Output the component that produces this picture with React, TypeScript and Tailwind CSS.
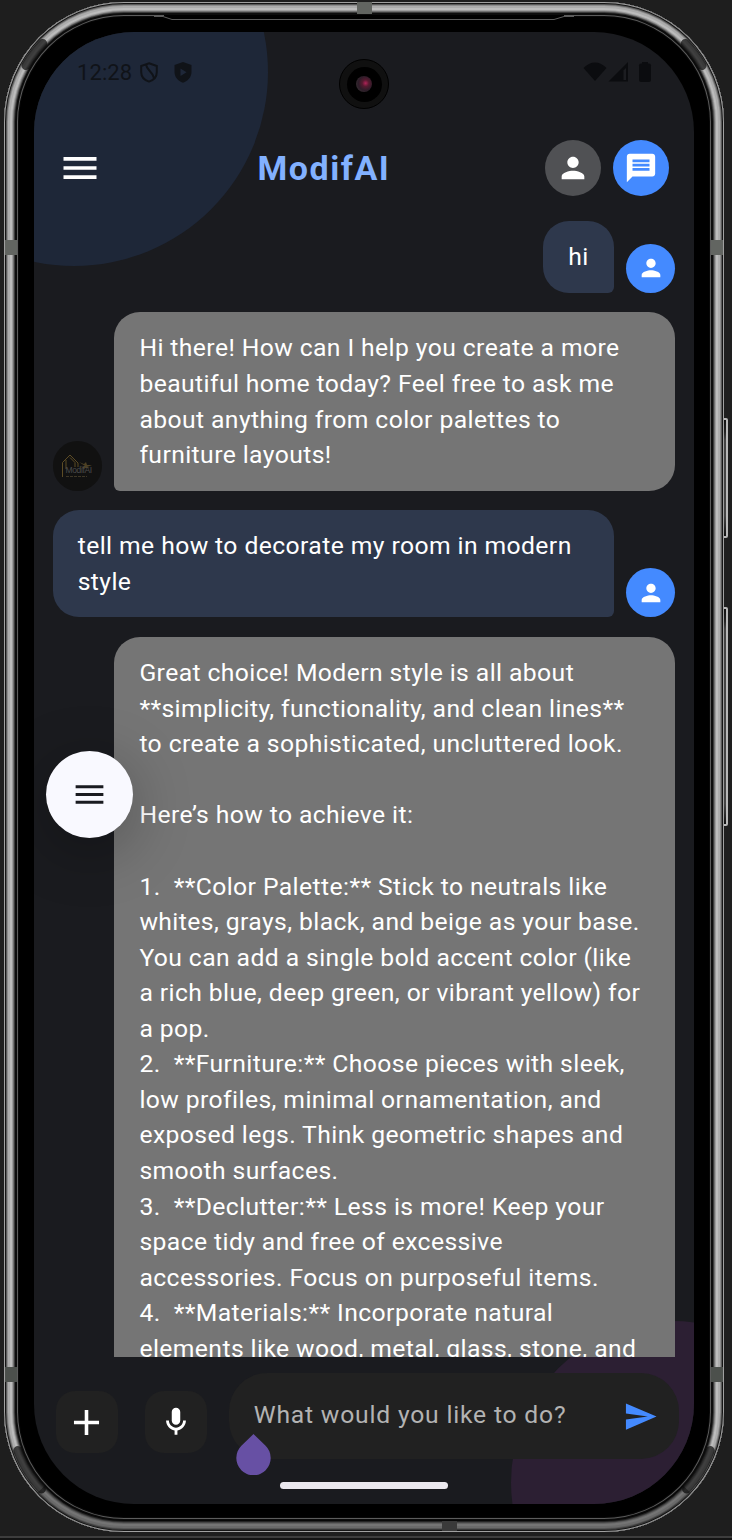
import React from "react";

const PERSON = "M12 12c2.21 0 4-1.79 4-4s-1.79-4-4-4-4 1.79-4 4 1.79 4 4 4zm0 2c-2.67 0-8 1.34-8 4v2h16v-2c0-2.66-5.33-4-8-4z";
const MENU = "M3 18h18v-2H3v2zm0-5h18v-2H3v2zm0-7v2h18V6H3z";
const CHAT = "M20 2H4c-1.1 0-1.99.9-1.99 2L2 22l4-4h14c1.1 0 2-.9 2-2V4c0-1.1-.9-2-2-2z";
const MIC = "M12 14c1.66 0 3-1.34 3-3V5c0-1.66-1.34-3-3-3S9 3.34 9 5v6c0 1.66 1.34 3 3 3zm5-3c0 2.76-2.24 5-5 5s-5-2.24-5-5H5c0 3.53 2.61 6.43 6 6.92V21h2v-3.08c3.39-.49 6-3.39 6-6.92h-2z";

function Glyph({ d, className }: { d: string; className: string }) {
  return (
    <svg viewBox="0 0 24 24" fill="currentColor" className={className}>
      <path d={d} />
    </svg>
  );
}

const GREETING = [
  "Hi there! How can I help you create a more",
  "beautiful home today? Feel free to ask me",
  "about anything from color palettes to",
  "furniture layouts!",
];

const QUESTION = ["tell me how to decorate my room in modern", "style"];

const ANSWER = [
  "Great choice! Modern style is all about",
  "**simplicity, functionality, and clean lines**",
  "to create a sophisticated, uncluttered look.",
  "",
  "Here’s how to achieve it:",
  "",
  "1.  **Color Palette:** Stick to neutrals like",
  "whites, grays, black, and beige as your base.",
  "You can add a single bold accent color (like",
  "a rich blue, deep green, or vibrant yellow) for",
  "a pop.",
  "2.  **Furniture:** Choose pieces with sleek,",
  "low profiles, minimal ornamentation, and",
  "exposed legs. Think geometric shapes and",
  "smooth surfaces.",
  "3.  **Declutter:** Less is more! Keep your",
  "space tidy and free of excessive",
  "accessories. Focus on purposeful items.",
  "4.  **Materials:** Incorporate natural",
  "elements like wood, metal, glass, stone, and",
];

function Lines({ lines }: { lines: string[] }) {
  return <p className="whitespace-pre">{lines.join("\n")}</p>;
}

function UserAvatar() {
  return (
    <div className="flex size-[49.4px] shrink-0 items-center justify-center rounded-full bg-[#448aff] text-white">
      <Glyph d={PERSON} className="size-7" />
    </div>
  );
}

function BotAvatar() {
  return (
    <div className="flex size-[49.4px] shrink-0 items-center justify-center rounded-full bg-[#111111]">
      <svg viewBox="0 0 49 49" className="size-[49px]" fill="none">
        <path d="M9.500 35V20.500L17 13l8 8v4M13 27V18m4-2.500 5 5V25" stroke="#5d4c25" strokeWidth="1" />
        <path d="m26 20 5 2 2-2 1 3 5 0-5 2 3 1h-9l4-2z" fill="#4d4023" />
        <text x="12.500" y="31" fontSize="8.500" textLength="27" className="font-['Liberation_Sans']" fill="#4b4b4b">ModifAI</text>
        <path d="M13 34.500h21" stroke="#4a412d" strokeWidth=".8" strokeDasharray="3 1" />
      </svg>
    </div>
  );
}

function StatusBar() {
  return (
    <div className="flex h-20 items-center justify-between pr-[42px] pl-[43px] text-[#101318]">
      <div className="flex items-center">
        <span className="w-[63px] text-[22px] tracking-[0.1px]">12:28</span>
        <svg viewBox="0 0 18 21" className="h-[21px] w-[18px]" fill="none" stroke="currentColor" strokeWidth="2">
          <path d="M9 1.200 16.800 4v6c0 4.500-3.300 8.200-7.800 9.600C4.500 18.200 1.200 14.500 1.200 10V4z" />
          <path d="M6 2.500C7 9 13 10 14 16" />
        </svg>
        <svg viewBox="0 0 18 21" className="ml-4 h-[21px] w-[18px]" fill="currentColor" fillRule="evenodd">
          <path d="M9 0 17.500 3v7c0 5-3.500 9-8.500 10.800C4 19 .5 15 .5 10V3zM6.500 6.500v7.500l6-3.750z" />
        </svg>
      </div>
      <svg viewBox="0 0 70 22" className="h-[22px] w-[70px] text-[#0b0c0f]" fill="currentColor">
        <path d="M1.500 7C8-.5 18-.5 24.500 7L13 20z" />
        <path d="M26.500 20.500 46 1v19.500z" />
        <path d="M41.500 9.500 44 7v12h-2.500z" fill="#1c1d21" />
        <rect x="57" y="2.500" width="12" height="18.500" rx="2" />
        <rect x="60" y="1" width="6" height="3" />
      </svg>
    </div>
  );
}

function Header() {
  return (
    <header className="flex h-28 items-center justify-between pr-[24.600px] pl-[24.400px]">
      <Glyph d={MENU} className="size-[44px] text-white" />
      <h1 className="mt-px text-[34px] font-bold tracking-[1.540px] text-[#82b1ff]">ModifAI</h1>
      <div className="flex gap-3">
        <div className="flex size-14 items-center justify-center rounded-full bg-[#505154] text-white">
          <Glyph d={PERSON} className="size-[34px]" />
        </div>
        <div className="flex size-14 items-center justify-center rounded-full bg-[#448aff] text-white">
          <svg viewBox="0 0 24 24" className="size-[34px]">
            <path d={CHAT} fill="currentColor" />
            <path d="M6 6h12v2H6zM6 9h12v2H6zM6 12h12v2H6z" fill="#448aff" />
          </svg>
        </div>
      </div>
    </header>
  );
}

function RimDetails() {
  return (
    <svg viewBox="0 0 720 1530" className="absolute inset-0 h-[1530px] w-[720px]" fill="none">
      <g stroke="#0a0a0a" strokeOpacity=".7" strokeWidth="9" strokeLinecap="round">
        <path d="M22 63.500A113 113 0 0 1 38.700 41.500" />
        <path d="M698 63.500A113 113 0 0 0 681.300 41.500" />
        <path d="M13.800 1448.600A113 113 0 0 0 37.400 1487" />
        <path d="M706.200 1448.600A113 113 0 0 1 682.600 1487" />
      </g>
      <path
        d="M37.400 1487A113 113 0 0 0 120 1523H600A113 113 0 0 0 682.600 1487"
        stroke="#000"
        strokeOpacity=".38"
        strokeWidth="10"
      />
      <path d="M160 14.500H560" stroke="#000" strokeWidth="3" />
      <path d="M150 14.500H159L168 17.500H550L560 14.500H570" stroke="#5c5c5c" />
    </svg>
  );
}

export default function App() {
  return (
    <div className="relative h-[1540px] w-[732px] overflow-hidden bg-[#1e1e1e] pt-[2px] pl-[4px] font-[Roboto,sans-serif]">
      <div className="absolute top-[418px] left-[720px] h-[120px] w-[8px] rounded-[2px] border-2 border-[#b8b8b8] bg-[linear-gradient(#111_0,#222_12px,#444_20px,#444_96px,#111_100%)]" />
      <div className="absolute top-[607px] left-[720px] h-[219px] w-[8px] rounded-[2px] border-2 border-[#b8b8b8] bg-[linear-gradient(#111_0,#222_12px,#444_20px,#444_195px,#111_100%)]" />
      <div className="absolute bottom-0 left-0 h-[4px] w-full border-t-2 border-[#3d3d3d] bg-[#141414]" />
      <div className="relative h-[1530px] w-[720px] rounded-[120px] bg-black p-[30px] shadow-[inset_0_0_0_1px_#a0a0a0,inset_0_0_0_2px_#151515,inset_0_0_0_3px_#5a5a5a,inset_0_0_0_4px_#8c8c8c,inset_0_0_0_6px_#acacac,inset_0_0_0_8px_#bcbcbc,inset_0_0_0_9px_#9c9c9c,inset_0_0_0_10px_#707070,inset_0_0_0_11px_#3a3a3a,inset_0_0_0_13px_#0c0c0c,inset_0_0_0_14px_#5c5c5c,inset_0_0_0_15px_#080808]">
        <RimDetails />
        <div className="absolute top-0 left-[353px] h-3 w-[15px] bg-[#626561]" />
        <div className="absolute top-[238px] left-px h-[15px] w-3 bg-[#626561]" />
        <div className="absolute top-[238px] right-px h-[15px] w-3 bg-[#626561]" />
        <div className="absolute top-[1365px] left-px h-[15px] w-3 bg-[#4c504c]" />
        <div className="absolute top-[1365px] right-px h-[15px] w-3 bg-[#4c504c]" />
        <div className="absolute bottom-px left-[438px] h-[10px] w-[15px] bg-[#3a3a3a]" />

        <main className="relative flex h-[1472px] w-[660px] flex-col overflow-hidden rounded-[100px] bg-[#1a1b1f]">
          <div className="absolute -top-[154px] -left-[154px] size-[388px] rounded-full bg-[#1e2738]" />
          <div className="absolute top-[1289px] left-[477px] size-[323px] rounded-full bg-[#2c1f33]" />
          <div className="absolute top-[27px] left-[305px] flex size-[50px] items-center justify-center rounded-full border border-black bg-[#101010]">
            <div className="flex size-[35px] items-center justify-center rounded-full bg-black">
              <div className="size-4 rounded-full bg-[radial-gradient(circle_at_60%_45%,#b02358_0,#571a30_25%,#2c1c28_55%,#3c3a36_100%)]" />
            </div>
          </div>

          <div className="relative flex h-full flex-col">
            <StatusBar />
            <Header />
            <div className="-mt-[3px] flex h-[1136px] shrink-0 flex-col gap-[19.200px] overflow-hidden pr-[18.700px] pl-[18.700px] text-[24.700px] leading-[35.560px] tracking-[0.410px] text-white">
              <div className="flex shrink-0 items-end justify-end gap-[12.300px]">
                <div className="rounded-[26px] rounded-br-[6px] bg-[#2e384c] px-[25px] pt-[18.400px] pb-[18px]">
                  <Lines lines={["hi"]} />
                </div>
                <UserAvatar />
              </div>
              <div className="flex shrink-0 items-end gap-[12.300px]">
                <BotAvatar />
                <div className="flex-1 rounded-[26px] rounded-bl-[6px] bg-[#757575] px-[25px] pt-[18.300px] pb-[18.100px]">
                  <Lines lines={GREETING} />
                </div>
              </div>
              <div className="flex shrink-0 items-end gap-[12.300px]">
                <div className="flex-1 rounded-[26px] rounded-br-[6px] bg-[#2e384c] px-[25px] pt-[18.400px] pb-[18px]">
                  <Lines lines={QUESTION} />
                </div>
                <UserAvatar />
              </div>
              <div className="ml-[61.700px] shrink-0 rounded-t-[26px] bg-[#757575] px-[25px] pt-[18.500px] pb-[19px]">
                <Lines lines={ANSWER} />
              </div>
            </div>

            <div className="flex pt-[16px] pl-[21.700px]">
              <button className="mt-[18px] flex size-[62px] items-center justify-center rounded-[19px] bg-[#212121] text-white">
                <Glyph d="M19 13h-6v6h-2v-6H5v-2h6V5h2v6h6v2z" className="size-[43px]" />
              </button>
              <button className="mt-[18px] ml-[27.500px] flex size-[62px] items-center justify-center rounded-[19px] bg-[#212121] text-white">
                <Glyph d={MIC} className="size-[34px]" />
              </button>
              <div className="ml-[21.500px] flex h-[86px] w-[450px] items-center justify-between rounded-[38px] bg-[#212121] pr-[20.500px] pl-[25px]">
                <span className="-mt-[2px] text-[24.700px] tracking-[0.800px] whitespace-nowrap text-[#b3b3b3]">What would you like to do?</span>
                <Glyph d="M2.010 21 23 12 2.010 3 2 10l15 2-15 2z" className="size-[35px] text-[#448aff]" />
              </div>
            </div>
          </div>

          <div className="absolute top-[719px] left-[12px] flex size-[87px] items-center justify-center rounded-full bg-[#f9f9ff] text-[#1a1b20] shadow-[0_12px_60px_rgba(0,0,0,0.28)]">
            <Glyph d={MENU} className="size-[37px]" />
          </div>
          <svg viewBox="0 0 35 41" className="absolute top-[1402px] left-[202px] h-[41px] w-[35px]" fill="#6750a4">
            <path d="M17.500 0 29.600 11.800A17.200 17.200 0 1 1 5.400 11.800z" />
          </svg>
          <div className="absolute top-[1450px] left-[246px] h-[7px] w-[168px] rounded-full bg-[#ece9ef]" />
        </main>
      </div>
    </div>
  );
}
